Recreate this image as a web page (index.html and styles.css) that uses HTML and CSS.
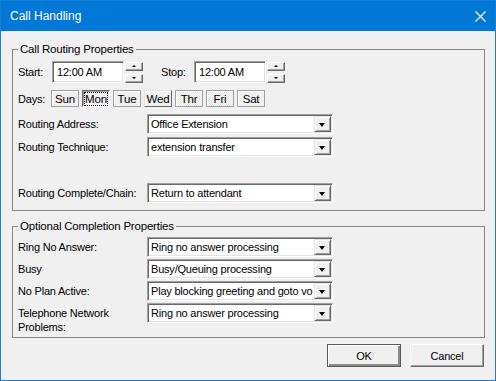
FILE: index.html
```html
<!DOCTYPE html>
<html>

<head>
  <title>Call Handling</title>
  <link rel="stylesheet" href="styles.css">
</head>

<body>
  <div class="window">
    <div class="titlebar">
      <span class="title">Call Handling</span>
      <svg class="close" width="11" height="11" viewBox="0 0 11 11">
        <path d="M0.5 0.5L10.5 10.5M10.5 0.5L0.5 10.5" stroke="#fff" stroke-width="1.1" fill="none"/>
      </svg>
    </div>
    <div class="content">
      <fieldset class="group routing">
        <legend>Call Routing Properties</legend>
        <div class="row time-row">
          <span class="lbl start-lbl">Start:</span>
          <span class="field">12:00 AM</span>
          <span class="spin">
            <span class="spin-btn up"></span>
            <span class="spin-btn down"></span>
          </span>
          <span class="lbl stop-lbl">Stop:</span>
          <span class="field">12:00 AM</span>
          <span class="spin">
            <span class="spin-btn up"></span>
            <span class="spin-btn down"></span>
          </span>
        </div>
        <div class="row days-row">
          <span class="lbl days-lbl">Days:</span>
          <span class="day">Sun</span>
          <span class="day pressed"><span class="focus">Mon</span></span>
          <span class="day">Tue</span>
          <span class="day dark">Wed</span>
          <span class="day checked">Thr</span>
          <span class="day checked">Fri</span>
          <span class="day">Sat</span>
        </div>
        <div class="row combo-row first">
          <span class="lbl wide">Routing Address:</span>
          <div class="combo"><span class="combo-text">Office Extension</span><span class="combo-btn"></span></div>
        </div>
        <div class="row combo-row">
          <span class="lbl wide">Routing Technique:</span>
          <div class="combo"><span class="combo-text">extension transfer</span><span class="combo-btn"></span></div>
        </div>
        <div class="row combo-row spaced">
          <span class="lbl wide">Routing Complete/Chain:</span>
          <div class="combo"><span class="combo-text">Return to attendant</span><span class="combo-btn"></span></div>
        </div>
      </fieldset>

      <fieldset class="group optional">
        <legend>Optional Completion Properties</legend>
        <div class="row opt-row">
          <span class="lbl wide">Ring No Answer:</span>
          <div class="combo"><span class="combo-text">Ring no answer processing</span><span class="combo-btn"></span></div>
        </div>
        <div class="row opt-row">
          <span class="lbl wide">Busy</span>
          <div class="combo"><span class="combo-text">Busy/Queuing processing</span><span class="combo-btn"></span></div>
        </div>
        <div class="row opt-row">
          <span class="lbl wide">No Plan Active:</span>
          <div class="combo"><span class="combo-text">Play blocking greeting and goto vo</span><span class="combo-btn"></span></div>
        </div>
        <div class="row opt-row">
          <span class="lbl wide">Telephone Network<br>Problems:</span>
          <div class="combo"><span class="combo-text">Ring no answer processing</span><span class="combo-btn"></span></div>
        </div>
      </fieldset>

      <div class="buttons">
        <span class="btn default">OK</span>
        <span class="btn">Cancel</span>
      </div>
    </div>
  </div>
</body>

</html>
```

FILE: styles.css
```css
body {
  margin: 0;
  font-family: "Liberation Sans", Arial, sans-serif;
  font-size: 11px;
  letter-spacing: -0.2px;
  color: #000;
}

.window {
  width: 496px;
  height: 381px;
  box-sizing: border-box;
  border: 1px solid #1c7cd5;
  background: #f0f0f0;
}

.titlebar {
  height: 30px;
  background: #0078d7;
  display: flex;
  align-items: center;
  justify-content: space-between;
  padding: 0 9px 0 9px;
}

.title {
  color: #fff;
  font-size: 12px;
  letter-spacing: 0;
}

.close {
  display: block;
}

.content {
  padding: 0 10px 0 11px;
}

.group {
  margin: 0;
  border: 1px solid #858585;
  padding: 5px 5px 7px 5px;
}

.group legend {
  padding: 0 2px;
  line-height: 14px;
  font-size: 11.5px;
}

.routing {
  margin-top: 11px;
}

.optional {
  margin-top: 8px;
  padding-top: 4px;
  padding-bottom: 3px;
}

.row {
  display: flex;
  align-items: center;
}

.lbl {
  white-space: nowrap;
}

.start-lbl {
  width: 34px;
}

.stop-lbl {
  width: 33px;
  margin-left: 18px;
}

.days-lbl {
  width: 33px;
}

.wide {
  width: 129px;
}

/* sunken edit field */
.field {
  width: 72px;
  height: 22px;
  box-sizing: border-box;
  background: #fff;
  border: 1px solid;
  border-color: #a0a0a0 #fff #fff #a0a0a0;
  box-shadow: inset 1px 1px 0 #696969, inset -1px -1px 0 #e3e3e3;
  padding: 0 4px;
  line-height: 20px;
}

.spin {
  display: flex;
  flex-direction: column;
  justify-content: space-between;
  width: 18px;
  height: 21px;
  margin-left: 1px;
}

.spin-btn {
  position: relative;
  height: 9px;
  box-sizing: border-box;
  background: #f0f0f0;
  border: 1px solid;
  border-color: #fff #696969 #696969 #fff;
  box-shadow: inset -1px -1px 0 #a0a0a0;
}

.spin-btn::after {
  content: "";
  position: absolute;
  left: 6px;
  top: 2px;
  border-left: 2px solid transparent;
  border-right: 2px solid transparent;
}

.spin-btn.up::after {
  border-bottom: 2px solid #000;
}

.spin-btn.down::after {
  border-top: 2px solid #000;
}

.days-row {
  margin-top: 7px;
  gap: 3px;
}

.days-lbl {
  margin-right: -3px;
}

.day {
  width: 28px;
  height: 17px;
  box-sizing: border-box;
  display: flex;
  align-items: center;
  justify-content: center;
  background: #f0f0f0;
  border: 1px solid #a0a0a0;
  box-shadow: inset 1px 1px 0 #fff;
  font-size: 11.5px;
}

.day.pressed {
  border-color: #696969 #fff #fff #696969;
  box-shadow: inset 1px 1px 0 #a0a0a0;
}

.day.dark {
  border-color: #e3e3e3 #696969 #696969 #e3e3e3;
}

.day.checked {
  background-image: repeating-conic-gradient(#fff 0 25%, #e3e3e3 0 50%);
  background-size: 2px 2px;
}

.focus {
  outline: 1px dotted #000;
  line-height: 12px;
}

/* drop down combo */
.combo {
  display: flex;
  width: 186px;
  height: 20px;
  box-sizing: border-box;
  background: #fff;
  border: 1px solid;
  border-color: #a0a0a0 #fff #fff #a0a0a0;
  box-shadow: inset 1px 1px 0 #696969, inset -1px -1px 0 #e3e3e3;
  padding: 1px;
}

.combo-text {
  flex: 1;
  overflow: hidden;
  white-space: nowrap;
  padding-left: 2px;
  line-height: 16px;
}

.combo-btn {
  position: relative;
  width: 17px;
  box-sizing: border-box;
  background: #f0f0f0;
  border: 1px solid;
  border-color: #e3e3e3 #696969 #696969 #e3e3e3;
  box-shadow: inset 1px 1px 0 #fff, inset -1px -1px 0 #a0a0a0;
}

.combo-btn::after {
  content: "";
  position: absolute;
  left: 4px;
  top: 6px;
  border-left: 3.5px solid transparent;
  border-right: 3.5px solid transparent;
  border-top: 4px solid #000;
}

.combo-row.first {
  margin-top: 7px;
}

.combo-row {
  margin-top: 3px;
}

.combo-row.spaced {
  margin-top: 26px;
}

.opt-row {
  align-items: flex-start;
  margin-top: 2px;
}

.opt-row:first-of-type {
  margin-top: 0;
}

.opt-row .lbl {
  padding-top: 3px;
  line-height: 14px;
}

.buttons {
  display: flex;
  justify-content: flex-end;
  gap: 9px;
  margin-top: 6px;
  padding-right: 1px;
}

.btn {
  width: 74px;
  height: 23px;
  box-sizing: border-box;
  display: flex;
  align-items: center;
  justify-content: center;
  background: #f0f0f0;
  border: 1px solid;
  border-color: #fff #696969 #696969 #fff;
  box-shadow: inset -1px -1px 0 #a0a0a0;
}

.btn.default {
  border: 1px solid #595959;
  box-shadow: inset 1px 1px 0 #fff, inset -2px -2px 0 #8a8a8a;
}
```
